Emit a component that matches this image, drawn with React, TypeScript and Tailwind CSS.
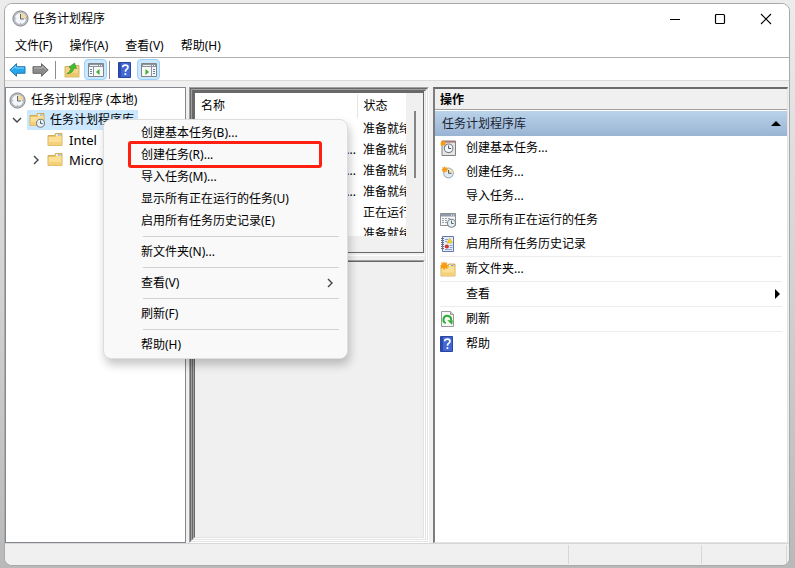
import { clsx } from "clsx";
import type { ReactNode } from "react";

interface IconProps {
  className?: string;
}

const ClockIcon = ({ className = "size-[17px]" }: IconProps) => (
  <svg viewBox="0 0 17 17" className={className} aria-hidden="true">
    <circle cx="8.5" cy="8.5" r="7.6" fill="#c3c6ca" stroke="#82878d" strokeWidth="1" />
    <circle cx="8.5" cy="8.5" r="6" fill="#f3f7fb" stroke="#969ca3" strokeWidth="0.6" />
    <path d="M8.5 8.5V2.8A5.7 5.7 0 0 1 14.2 8.5Z" fill="#f3dca4" />
    <path d="M8.5 4V9H11.8" fill="none" stroke="#5c6369" strokeWidth="1" />
    <path d="M3.2 8.5h1M8.5 13.8v-1M13.8 8.5h-1" stroke="#8994a0" strokeWidth="0.8" />
  </svg>
);

const MiniClock = () => (
  <g>
    <circle cx="11.5" cy="11.3" r="4" fill="#e9f1f5" stroke="#78838b" strokeWidth="1.1" />
    <path d="M11.5 8.6v2.9h2.2" fill="none" stroke="#46535c" strokeWidth="0.9" />
  </g>
);

const FolderShape = () => (
  <g>
    <path d="M1 3.5h6.5l1-2H15v12H1Z" fill="#e8c46c" stroke="#c99f45" strokeWidth="0.8" />
    <path d="M9 2.3h4.6v1.5H9Z" fill="#fff" />
    <path d="M10.8 2.6h2.6v1h-2.6Z" fill="#4aa3df" />
    <path d="M1.5 5h7l1-1H14.6v9.2H1.5Z" fill="#fadf94" />
    <path d="M1.5 10h13v3.2h-13Z" fill="#f3d079" />
  </g>
);

const Burst = () => (
  <path
    d="M4 0l.9 2.2L7.2 1l-.5 2.5L9 4.2l-2 1.4.8 2.2-2.4-.6L4 9.200l-1-2.200L.6 7.800l.7-2.300L0 4.200l1.800-.8L1.200 1l2.100.9Z"
    fill="#f79c12"
  />
);

const FolderIcon = ({ className = "size-4" }: IconProps) => (
  <svg viewBox="0 0 16 16" className={className} aria-hidden="true">
    <FolderShape />
  </svg>
);

const FolderClockIcon = () => (
  <svg viewBox="0 0 16 16" className="size-4" aria-hidden="true">
    <FolderShape />
    <MiniClock />
  </svg>
);

const NewFolderIcon = () => (
  <svg viewBox="0 0 16 16" className="size-4" aria-hidden="true">
    <g transform="translate(0 1.500)">
      <FolderShape />
    </g>
    <Burst />
  </svg>
);

const ArrowIcon = ({ tone }: { tone: "blue" | "gray" }) => (
  <svg
    viewBox="0 0 17 14"
    className={clsx("h-3.5 w-[17px]", tone === "gray" && "-scale-x-100")}
    aria-hidden="true"
  >
    <path
      d="M.8 7L7.500 .7V3.700H16V10.300H7.500V13.300Z"
      fill={tone === "blue" ? "#22a7ea" : "#8b8b8b"}
      stroke={tone === "blue" ? "#2b76b0" : "#666"}
      strokeLinejoin="round"
    />
    <path d="M2.800 6.800L6.600 3.200V5H15" fill="none" stroke={tone === "blue" ? "#8ad7fa" : "#b9b9b9"} />
  </svg>
);

const UpFolderIcon = () => (
  <svg viewBox="0 0 16 16" className="size-4" aria-hidden="true">
    <path d="M1 4.500h6l1-1h7v11.500H1Z" fill="#f4d581" stroke="#caa24a" strokeWidth="0.8" />
    <path d="M1.500 11h13v3.600h-13Z" fill="#ecc76c" />
    <path d="M3 11.500C5.500 10.500 6.500 8.500 6.800 5.500L4.800 5.200L10.500 1l2 5.500L10 6C9.300 9 7.500 11.800 3 11.500Z" fill="#43bd36" stroke="#2b8e25" strokeWidth="0.6" />
  </svg>
);

const PaneIcon = ({ side }: { side: "left" | "right" }) => (
  <svg viewBox="0 0 16 14" className="h-3.5 w-4" aria-hidden="true">
    <path d="M.5.5h15v13H.5Z" fill="#f8f8f8" stroke="#7d848c" />
    <path d="M1 1h14v3H1Z" fill="#8c949d" />
    <path d="M2 2.500h8" stroke="#eef1f4" />
    <path d="M11 2.500h1M13 2.500h1" stroke="#fff" />
    {side === "left" ? (
      <g>
        <path d="M5.500 4v9.500" stroke="#8c949d" />
        <path d="M2 6.500h2M2 8.500h2M2 10.500h2" stroke="#5d83a8" />
        <path d="M11.500 6v6L8 9Z" fill="#3fae2e" />
      </g>
    ) : (
      <g>
        <path d="M10.500 4v9.500" stroke="#8c949d" />
        <path d="M12 6.500h2M12 8.500h2M12 10.500h2" stroke="#5d83a8" />
        <path d="M4.500 6v6L8 9Z" fill="#3fae2e" />
      </g>
    )}
  </svg>
);

const HelpIcon = () => (
  <svg viewBox="0 0 13 16" className="h-4 w-[13px]" aria-hidden="true">
    <path d="M.5.5h12v15H.5Z" fill="#4268d6" stroke="#2a459c" />
    <path d="M1 1h2v14H1Z" fill="#2c4bb0" />
    <path d="M4.700 5.200C4.700 2.300 10 2.300 10 5.200C10 7.300 7.400 7.200 7.400 9.800" fill="none" stroke="#fff" strokeWidth="1.700" />
    <path d="M6.500 11.200h1.800v1.800H6.500Z" fill="#fff" />
  </svg>
);

const BasicTaskIcon = () => (
  <svg viewBox="0 0 16 16" className="size-4" aria-hidden="true">
    <path d="M2 1h13.500v14.500H2Z" fill="#e7e4e1" stroke="#85807c" />
    <path d="M2.500 1.200h12.500v1.400H2.500Z" fill="#a2635c" />
    <circle cx="8.600" cy="8.300" r="4.300" fill="#f2f8fb" stroke="#76828a" strokeWidth="1.100" />
    <path d="M8.600 5.500v3h2.500" fill="none" stroke="#435059" />
    <g transform="scale(.7)">
      <Burst />
    </g>
  </svg>
);

const TaskIcon = () => (
  <svg viewBox="0 0 16 16" className="size-4" aria-hidden="true">
    <circle cx="8.500" cy="9" r="4.900" fill="#e2ebf3" stroke="#a3b1bd" strokeWidth="1.100" />
    <path d="M8.500 9V4.500A4.500 4.500 0 0 1 13 9Z" fill="#f5dfa8" />
    <path d="M8.500 6v3.300h3" fill="none" stroke="#50606c" />
    <g transform="translate(1.500 2) scale(.75)">
      <Burst />
    </g>
  </svg>
);

const RunningIcon = () => (
  <svg viewBox="0 0 16 16" className="size-4" aria-hidden="true">
    <path d="M.5 1.500h15v12H.5Z" fill="#f7f7f7" stroke="#8c8f96" />
    <path d="M1 2h14v2.500H1Z" fill="#9299a8" />
    <path d="M11 3h1M13 3h1" stroke="#fff" />
    <path d="M2 6.500h2M5 6.500h2M8 6.500h2M2 8.500h2M5 8.500h2M2 10.500h2M5 10.500h2" stroke="#9b9fa6" />
    <MiniClock />
  </svg>
);

const HistoryIcon = () => (
  <svg viewBox="0 0 16 16" className="size-4" aria-hidden="true">
    <path d="M2.500.5h11v15h-11Z" fill="#e6edfa" stroke="#6278ab" />
    <path d="M1 2.500h3M1 4.500h3M1 6.500h3M1 8.500h3M1 10.500h3M1 12.500h3" stroke="#69707d" />
    <path d="M5 3.500h3M5 5.500h2M9.500 9.500h3M9.500 11.500h3M5 13.500h7" stroke="#8aa0cf" />
    <path d="M9.800 2l2.800 5H7Z" fill="#f5d22a" stroke="#d3a416" strokeWidth="0.500" />
    <circle cx="6.800" cy="10.500" r="2.100" fill="#d8352a" />
  </svg>
);

const RefreshIcon = () => (
  <svg viewBox="0 0 16 16" className="size-4" aria-hidden="true">
    <path d="M1.500.5h9l3 3v12h-12Z" fill="#f8f8f8" stroke="#999" />
    <path d="M10.500.5v3h3" fill="#ddd" stroke="#999" />
    <path d="M5.800 12.200A3.800 3.800 0 1 1 11 9.500" fill="none" stroke="#2fae35" strokeWidth="2" />
    <path d="M7.300 9.300h5.500l-.6 4.700Z" fill="#2fae35" />
  </svg>
);

interface Task {
  name: string;
  status: string;
}

const tasks: Task[] = [
  { name: "", status: "准备就绪" },
  { name: "...", status: "准备就绪" },
  { name: "...", status: "准备就绪" },
  { name: "...", status: "准备就绪" },
  { name: "", status: "正在运行" },
  { name: "", status: "准备就绪" },
];

interface Action {
  label: string;
  icon?: ReactNode;
  submenu?: boolean;
}

const actionGroups: Action[][] = [
  [
    { label: "创建基本任务...", icon: <BasicTaskIcon /> },
    { label: "创建任务...", icon: <TaskIcon /> },
    { label: "导入任务..." },
    { label: "显示所有正在运行的任务", icon: <RunningIcon /> },
    { label: "启用所有任务历史记录", icon: <HistoryIcon /> },
  ],
  [{ label: "新文件夹...", icon: <NewFolderIcon /> }],
  [{ label: "查看", submenu: true }],
  [{ label: "刷新", icon: <RefreshIcon /> }],
  [{ label: "帮助", icon: <HelpIcon /> }],
];

const contextGroups = [
  ["创建基本任务(B)...", "创建任务(R)...", "导入任务(M)...", "显示所有正在运行的任务(U)", "启用所有任务历史记录(E)"],
  ["新文件夹(N)..."],
  ["查看(V)"],
  ["刷新(F)"],
  ["帮助(H)"],
];

const TitleBar = () => (
  <header className="flex h-[29px] items-center bg-white pl-[7px]">
    <ClockIcon />
    <h1 className="ml-1 flex-1">任务计划程序</h1>
    <button type="button" aria-label="最小化" className="flex h-7 w-[45px] items-center justify-center">
      <svg viewBox="0 0 12 12" className="size-3" aria-hidden="true">
        <path d="M1 6.500h10" stroke="#000" />
      </svg>
    </button>
    <button type="button" aria-label="最大化" className="flex h-7 w-[45px] items-center justify-center">
      <svg viewBox="0 0 12 12" className="size-3" aria-hidden="true">
        <rect x="1.500" y="1.500" width="9" height="9" rx="1" fill="none" stroke="#000" strokeWidth="1.200" />
      </svg>
    </button>
    <button type="button" aria-label="关闭" className="flex h-7 w-[47px] items-center justify-center">
      <svg viewBox="0 0 12 12" className="size-3" aria-hidden="true">
        <path d="M1 1l10 10M11 1L1 11" stroke="#000" strokeWidth="1.100" />
      </svg>
    </button>
  </header>
);

const MenuBar = () => (
  <nav className="flex h-[25px] items-center gap-[17px] border-b border-[#b0b0b0] bg-white px-2.5 pt-px">
    {["文件(F)", "操作(A)", "查看(V)", "帮助(H)"].map((label) => (
      <button key={label} type="button">
        {label}
      </button>
    ))}
  </nav>
);

const Toolbar = () => (
  <div className="flex h-[23px] items-center border-b border-[#dadada] bg-white pt-px pl-1">
    <button type="button" aria-label="后退">
      <ArrowIcon tone="blue" />
    </button>
    <button type="button" aria-label="前进" className="ml-1.5">
      <ArrowIcon tone="gray" />
    </button>
    <span className="ml-1.5 h-[18px] w-px bg-[#8d8d8d]" />
    <button type="button" aria-label="向上" className="ml-2">
      <UpFolderIcon />
    </button>
    <button
      type="button"
      aria-label="显示/隐藏控制台树"
      className="ml-1 flex h-[21px] w-[23px] items-center justify-center rounded-sm border border-[#99d1ff] bg-[#cce8ff]"
    >
      <PaneIcon side="left" />
    </button>
    <span className="ml-0.5 h-[18px] w-px bg-[#8d8d8d]" />
    <button type="button" aria-label="帮助" className="ml-2">
      <HelpIcon />
    </button>
    <button
      type="button"
      aria-label="显示/隐藏操作窗格"
      className="ml-1.5 flex h-[21px] w-[23px] items-center justify-center rounded-sm border border-[#99d1ff] bg-[#cce8ff]"
    >
      <PaneIcon side="right" />
    </button>
  </div>
);

const Chevron = ({ d }: { d: string }) => (
  <svg viewBox="0 0 10 10" className="size-2.5" aria-hidden="true">
    <path d={d} fill="none" stroke="#444" strokeWidth="1.400" />
  </svg>
);

const Tree = () => (
  <aside className="w-[181px] shrink-0 overflow-hidden border border-[#828790] bg-white pt-0.5">
    <ul>
      <li>
        <div className="flex h-5 items-center gap-[5px] pl-[3px]">
          <ClockIcon />
          <span>任务计划程序 (本地)</span>
        </div>
        <ul>
          <li>
            <div className="flex h-5 items-center pl-1.5">
              <Chevron d="M1 3l4 4 4-4" />
              <span className="ml-[5px] flex h-5 items-center gap-[5px] bg-[#cce8ff] pr-1 pl-0.5">
                <FolderClockIcon />
                任务计划程序库
              </span>
            </div>
            <ul>
              <li className="flex h-5 items-center gap-1.5 pl-[41px] text-[13px]">
                <FolderIcon />
                Intel
              </li>
              <li className="flex h-5 items-center pl-[25px] text-[13px]">
                <Chevron d="M3 1l4 4-4 4" />
                <span className="ml-1.5 flex items-center gap-1.5">
                  <FolderIcon />
                  Micro
                </span>
              </li>
            </ul>
          </li>
        </ul>
      </li>
    </ul>
  </aside>
);

const sunken = "border border-t-[#a0a0a0] border-l-[#a0a0a0] border-r-white border-b-white";
const sunkenInner = "border border-t-[#696969] border-l-[#696969] border-r-[#e3e3e3] border-b-[#e3e3e3]";

const Sunken = ({ className, children }: { className?: string; children?: ReactNode }) => (
  <div className={clsx("flex flex-col", sunken, className)}>
    <div className={clsx("flex min-h-0 flex-1 flex-col", sunkenInner)}>{children}</div>
  </div>
);

const TaskList = () => (
  <div className="mr-px flex h-[162px] shrink-0 border-t-2 border-r border-b border-l-2 border-[#696969] pr-[17px] pb-4">
    <div className="flex-1 overflow-hidden bg-white pt-px">
      <table className="w-full table-fixed border-collapse text-left">
        <thead>
          <tr className="h-6">
            <th className="border-r border-[#e5e5e5] pl-1.5 font-normal">名称</th>
            <th className="w-[49px] pl-1.5 font-normal">状态</th>
          </tr>
        </thead>
        <tbody>
          {tasks.map((task, i) => (
            <tr key={i} className="h-[21px]">
              <td className="pr-px text-right">{task.name}</td>
              <td className="overflow-hidden pl-1.5 whitespace-nowrap">{task.status}</td>
            </tr>
          ))}
        </tbody>
      </table>
    </div>
    <div className="-mr-2.5 ml-2 pt-[18px]">
      <div className="h-[67px] w-0.5 bg-[#858585]" />
    </div>
  </div>
);

const ActionsPane = () => (
  <section className="flex min-w-0 flex-1 flex-col border-t-2 border-r border-b border-l-2 border-t-[#696969] border-r-[#e3e3e3] border-b-[#e3e3e3] border-l-[#7d7d7d] bg-white">
    <h2 className="flex h-[21px] items-center border-b border-[#a0a0a0] bg-[#f0f0f0] pt-px pl-[5px] font-bold">操作</h2>
    <div className="mt-px flex h-[25px] items-center justify-between bg-linear-to-b from-[#bad3ea] to-[#99b3d3] pr-1.5 pl-[7px] text-[#1a2433]">
      <span>任务计划程序库</span>
      <svg viewBox="0 0 10 5" className="h-[5px] w-2.5" aria-hidden="true">
        <path d="M5 0l5 5H0Z" fill="#000" />
      </svg>
    </div>
    <div className="pr-[5px] pl-[5px]">
      {actionGroups.map((group, i) => (
        <ul key={i} className={clsx(i > 0 && "border-t border-[#ececec]")}>
          {group.map((action) => (
            <li key={action.label}>
              <button type="button" className="flex h-6 w-full items-center text-left">
                <span className="flex w-[26px] shrink-0">{action.icon}</span>
                <span className="flex-1">{action.label}</span>
                {action.submenu && (
                  <svg viewBox="0 0 5 10" className="mr-0.5 h-2.5 w-[5px]" aria-hidden="true">
                    <path d="M0 0l5 5-5 5Z" fill="#000" />
                  </svg>
                )}
              </button>
            </li>
          ))}
        </ul>
      ))}
    </div>
  </section>
);

const ContextMenu = () => (
  <div
    role="menu"
    className="absolute top-[38px] left-[98px] z-10 w-[245px] rounded-lg border border-[#dedede] bg-[#f9f9f9] py-0.5 shadow-[2px_6px_10px_rgba(0,0,0,0.22)]"
  >
    {contextGroups.map((group, i) => (
      <div key={i}>
        {i > 0 && <div className="my-1 mr-2 ml-[39px] border-t border-[#d2d2d2]" />}
        {group.map((label) => (
          <button
            key={label}
            type="button"
            role="menuitem"
            className="relative flex h-[22px] w-full items-center justify-between pr-3 pl-[37px] text-left"
          >
            {label}
            {label === "查看(V)" && <Chevron d="M3 1l4 4-4 4" />}
            {label === "创建任务(R)..." && (
              <span className="absolute -top-[3px] right-[25px] -bottom-0.5 left-6 rounded-[3px] border-3 border-[#ff2012]" />
            )}
          </button>
        ))}
      </div>
    ))}
  </div>
);

const StatusBar = () => (
  <footer className="flex h-[22px] border-t border-[#d7d7d7] bg-[#f0f0f0] py-px pr-0.5">
    <div className="flex-1 border-r border-[#d7d7d7]" />
    <div className="w-[133px] border-r border-[#d7d7d7]" />
    <div className="w-[85px] border-r border-[#d7d7d7]" />
  </footer>
);

export default function App() {
  return (
    <div className="flex h-screen flex-col bg-linear-to-b from-[#ececec] to-[#b9b9b9] pt-[3px] pr-[5px] pb-0.5 pl-1 font-['Noto_Sans','Noto_Sans_CJK_SC',sans-serif] text-xs leading-4 text-black">
      <div className="flex min-h-0 flex-1 flex-col overflow-hidden rounded-lg border border-[#a9a9a9] bg-[#f0f0f0]">
        <TitleBar />
        <MenuBar />
        <Toolbar />
        <main className="relative flex min-h-0 flex-1 pt-1.5 pr-px">
          <Tree />
          <Sunken className="ml-[3px] w-60 shrink-0">
            <Sunken className="flex-1">
              <TaskList />
              <div className="mt-0.5 mb-1 border-t border-white" />
              <Sunken className="flex-1" />
            </Sunken>
          </Sunken>
          <div className="w-1 shrink-0" />
          <ActionsPane />
          <ContextMenu />
        </main>
        <StatusBar />
      </div>
    </div>
  );
}
